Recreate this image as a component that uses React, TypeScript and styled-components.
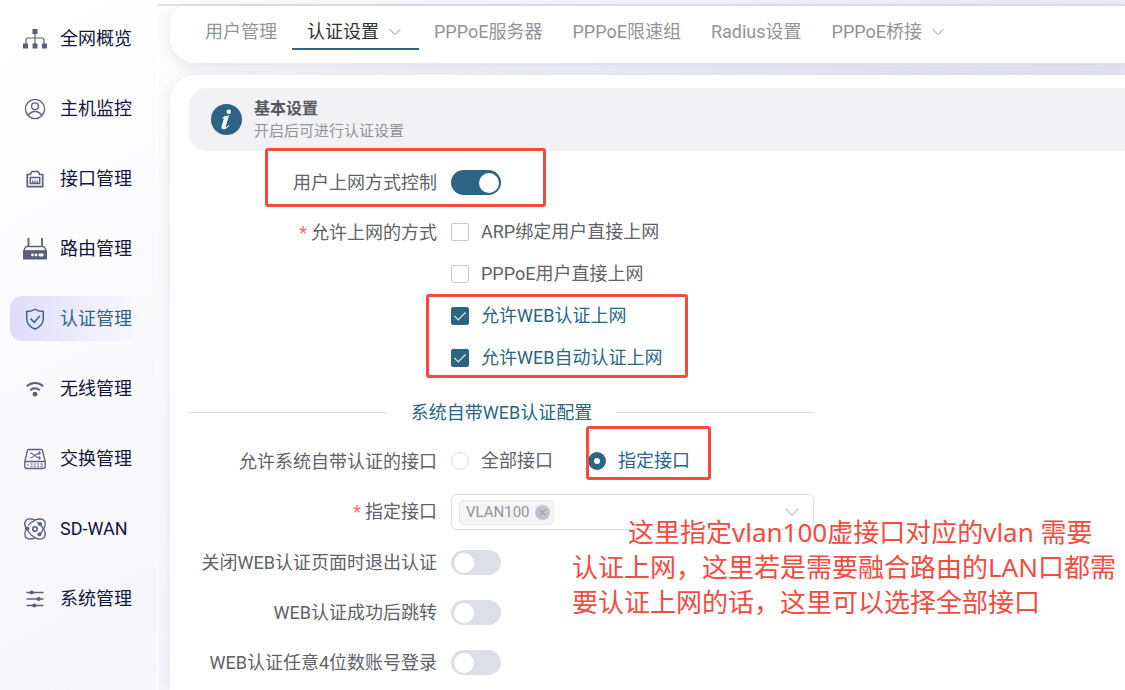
import React from "react";
import styled, { createGlobalStyle } from "styled-components";

const brand = "#2b6583";

const GlobalStyle = createGlobalStyle`
  *, *::before, *::after { box-sizing: border-box; }
  body {
    margin: 0;
    font-family: Roboto, "Noto Sans CJK SC", sans-serif;
    font-size: 18px;
    color: #606266;
  }
  button, input, select { font: inherit; color: inherit; }
`;

const Page = styled.div`
  position: relative;
  display: flex;
  min-height: 100vh;
  overflow: hidden;
  background: linear-gradient(150deg, #ffffff 0%, #f7f7fb 50%, #eef0f5 100%);
`;

const Sidebar = styled.nav`
  flex: 0 0 158px;
  display: flex;
  flex-direction: column;
  gap: 25px;
  padding: 16px 8px 0 10px;
  border-right: 1px solid #ffffff;
`;

const NavLink = styled.a<{ $active?: boolean }>`
  display: flex;
  align-items: center;
  gap: 13px;
  height: 45px;
  padding: 1px 0 0 13px;
  border-radius: 12px;
  line-height: 26px;
  text-decoration: none;
  white-space: nowrap;
  color: ${(p) => (p.$active ? brand : "#12143a")};
  background: ${(p) =>
    p.$active ? "linear-gradient(90deg, #dfdcfb, rgba(240, 241, 248, 0))" : "none"};
  svg { flex: none; color: ${(p) => (p.$active ? brand : "#5c5f7a")}; }
`;

const Main = styled.main`
  flex: 1;
  min-width: 0;
  display: flex;
  flex-direction: column;
  gap: 12px;
  padding-left: 12px;
  background: linear-gradient(90deg, rgba(238, 238, 248, 0), #ebebf7);
`;

const TopLine = styled.div`
  height: 6px;
  margin: 0 0 -12px -12px;
  border-bottom: 2px solid #e1e1e6;
`;

const TabBar = styled.nav`
  display: flex;
  height: 57px;
  padding-left: 20px;
  background: #ffffff;
  border-radius: 16px 0 0 26px;
  box-shadow: 0 4px 16px rgba(30, 30, 60, 0.1);
`;

const Tab = styled.a<{ $active?: boolean }>`
  display: flex;
  align-items: center;
  gap: 10px;
  height: 44px;
  padding: 10px 15px 0;
  border-bottom: 2px solid ${(p) => (p.$active ? brand : "transparent")};
  color: ${(p) => (p.$active ? "#303133" : "#909399")};
  line-height: 32px;
  text-decoration: none;
  white-space: nowrap;
  svg { margin-right: 3px; color: #909399; }
`;

const Card = styled.section`
  flex: 1;
  padding: 13px 0 0 19px;
  background: #ffffff;
  border-radius: 26px 0 0 0;
  box-shadow: 0 0 16px rgba(30, 30, 60, 0.08);
`;

const Banner = styled.header`
  display: flex;
  align-items: center;
  gap: 12px;
  height: 63px;
  padding-left: 22px;
  background: #f2f2f4;
  border-radius: 18px 0 0 18px;
`;

const BannerTitle = styled.h1`
  margin: 0;
  font-size: 16px;
  line-height: 22px;
  font-weight: 700;
  color: #55575c;
`;

const BannerHint = styled.p`
  margin: 0;
  font-size: 15px;
  line-height: 22px;
  color: #909399;
`;

const Form = styled.form`
  display: flex;
  flex-direction: column;
  gap: 15px;
  max-width: 625px;
  padding: 14px 0 8px;
`;

const Row = styled.div`
  display: grid;
  grid-template-columns: 248px 1fr;
  column-gap: 14px;
`;

const Label = styled.label`
  line-height: 35px;
  text-align: right;
  white-space: nowrap;
`;

const Required = styled.span`
  margin-right: 4px;
  color: #f56c6c;
`;

const Choices = styled.div<{ $inline?: boolean }>`
  display: flex;
  flex-direction: ${(p) => (p.$inline ? "row" : "column")};
  gap: ${(p) => (p.$inline ? "35px" : "7px")};
`;

const Choice = styled.label<{ $on?: boolean }>`
  display: flex;
  align-items: center;
  gap: 12px;
  height: 34px;
  line-height: 34px;
  margin-bottom: 1px;
  white-space: nowrap;
  color: ${(p) => (p.$on ? brand : "#606266")};
`;

const Check = styled.input`
  appearance: none;
  display: grid;
  place-items: center;
  width: 18px;
  height: 18px;
  margin: 0;
  border: 1px solid #c9cbd2;
  border-radius: 2px;
  background: #ffffff;
  &:checked { background: ${brand}; border-color: ${brand}; }
  &:checked::after {
    content: "";
    width: 6px;
    height: 11px;
    margin-top: -4px;
    border: solid #ffffff;
    border-width: 0 1px 1px 0;
    transform: rotate(45deg);
  }
`;

const Radio = styled.input`
  appearance: none;
  width: 18px;
  height: 18px;
  margin: 0;
  border: 1px solid #dcdfe6;
  border-radius: 50%;
  background: #ffffff;
  &:checked { border: 6px solid ${brand}; }
`;

const Switch = styled.input`
  appearance: none;
  align-self: center;
  width: 50px;
  height: 25px;
  margin: 0;
  padding: 3px 2px 2px 3px;
  border-radius: 13px;
  background: #dcdfe6;
  &::after {
    content: "";
    display: block;
    width: 20px;
    height: 20px;
    border-radius: 50%;
    background: #ffffff;
  }
  &:checked { background: ${brand}; }
  &:checked::after { margin-left: auto; }
`;

const Divider = styled.h2`
  display: flex;
  align-items: center;
  gap: 24px;
  margin: 4px 0 -1px;
  font-size: 18px;
  font-weight: 400;
  line-height: 35px;
  color: ${brand};
  white-space: nowrap;
  &::before, &::after {
    content: "";
    flex: 1;
    height: 1px;
    background: #dcdfe6;
  }
`;

const SelectBox = styled.div`
  display: flex;
  align-items: center;
  height: 36px;
  padding: 0 14px 0 7px;
  border: 1px solid #dcdfe6;
  border-radius: 5px;
  select {
    flex: 1;
    min-width: 0;
    height: 34px;
    appearance: none;
    border: 0;
    outline: 0;
    background: transparent;
  }
  > svg { color: #c0c4cc; }
`;

const Tag = styled.span`
  display: flex;
  align-items: center;
  gap: 5px;
  height: 25px;
  padding: 0 3px 0 6px;
  border: 1px solid #e9e9eb;
  border-radius: 5px;
  background: #f4f4f5;
  color: #909399;
  font-size: 15px;
  line-height: 23px;
`;

const TagClose = styled.button`
  display: flex;
  padding: 0;
  border: 0;
  border-radius: 50%;
  background: #c0c4cc;
  color: #85888f;
`;

const Highlight = styled.div<{ $x: number; $y: number; $w: number; $h: number }>`
  position: absolute;
  left: ${(p) => p.$x}px;
  top: ${(p) => p.$y}px;
  width: ${(p) => p.$w}px;
  height: ${(p) => p.$h}px;
  border: 3px solid #f24b3f;
  border-radius: 3px;
  pointer-events: none;
`;

const Note = styled.p`
  position: absolute;
  left: 572px;
  top: 515px;
  margin: 0;
  text-indent: 56px;
  font-family: "Noto Sans", "Noto Sans CJK SC", sans-serif;
  font-size: 26px;
  line-height: 35px;
  color: #f24b3f;
  white-space: nowrap;
  pointer-events: none;
`;

const Icon = ({ children }: { children: React.ReactNode }) => (
  <svg width="24" height="24" viewBox="0 0 24 24" fill="none" stroke="currentColor" strokeWidth="1.5" aria-hidden="true">
    {children}
  </svg>
);

const Chevron = ({ size = 12 }: { size?: number }) => (
  <svg width={size} height={size} viewBox="0 0 12 12" fill="none" stroke="currentColor" strokeWidth="1" aria-hidden="true">
    <path d="M.7 3.2 6 8.7l5.3-5.5" />
  </svg>
);

const icons = {
  topology: (
    <Icon>
      <path d="M12 6v12M3 17v-4q0-2 2-2h14q2 0 2 2v4" strokeWidth="1.2" />
      <path d="M9.5 2h5v5h-5zM0 16.5h5v5H0zM9.5 16.5h5v5h-5zM19 16.5h5v5h-5z" fill="currentColor" stroke="none" />
    </Icon>
  ),
  user: (
    <Icon>
      <circle cx="12" cy="12" r="9.6" strokeWidth="1.3" />
      <circle cx="12" cy="9.3" r="3.4" strokeWidth="1.3" />
      <path d="M5.2 18.8c1.500-3 4-4.300 6.800-4.300s5.300 1.300 6.800 4.300" strokeWidth="1.3" />
    </Icon>
  ),
  port: (
    <Icon>
      <path d="M4.300 19.700V7.500h3.200q.8-3 1.800-3h5.400q1 0 1.800 3h3.200v12.200z" strokeWidth="1.700" />
      <path d="M7.300 16.500v-6h9.400v6z" strokeWidth="1.500" />
      <path d="M9.800 16v-2.500M12 16v-2.500M14.200 16v-2.500" strokeWidth="1.200" />
    </Icon>
  ),
  router: (
    <Icon>
      <path d="M5.500 1v9M19 1v9" strokeWidth="1.800" />
      <path d="M4 9.500h16q1.500 0 2 1.500l1.200 3H.8L2 11q.5-1.500 2-1.500z" strokeWidth="1.400" />
      <path d="M0 13.500h24v9H0z" fill="currentColor" stroke="none" />
      <g fill="#fff" stroke="none">
        <circle cx="9.500" cy="18" r="1.400" />
        <circle cx="13" cy="18" r="1.400" />
        <rect x="15.500" y="16.600" width="5.200" height="2.800" rx="1.400" />
      </g>
    </Icon>
  ),
  shield: (
    <Icon>
      <path d="M12 2.200c2.300 1.700 5 2.300 8.300 2.300v7.500c0 5-3.500 8-8.300 10-4.800-2-8.300-5-8.300-10V4.500c3.300 0 6-.6 8.300-2.300z" strokeWidth="1.400" />
      <path d="m7.500 11.500 3.700 3.800 5.600-6.300" strokeWidth="1.500" />
    </Icon>
  ),
  wifi: (
    <Icon>
      <path d="M3.800 9.200c4.800-4.200 11.600-4.200 16.400 0M7.200 13.300c2.900-2.500 6.700-2.500 9.600 0" strokeWidth="2" />
      <circle cx="12" cy="17.200" r="2.400" fill="currentColor" stroke="none" />
    </Icon>
  ),
  exchange: (
    <Icon>
      <path d="M5.700 2.500h12.600q1 0 1.200 1l2.700 11v5q0 2-2 2H3.800q-2 0-2-2v-5l2.700-11q.2-1 1.200-1zM1.800 14.500h20.400" strokeWidth="1.300" />
      <path d="M6.800 6c4.500 0 5 5 10.400 5M6.800 11c4.500 0 5-5 10.400-5M15.700 4.500 17.200 6l-1.500 1.500M15.700 9.500l1.500 1.500-1.500 1.500" strokeWidth="1.200" />
      <path d="M4 18h1.500M7.500 17h2.200M10.700 17h2.200M13.900 17h2.200M17.500 17h2.500M7.500 19.300h2.200M10.700 19.300h2.200M13.900 19.300h2.200M17.500 19.300h2.500" strokeWidth="1.100" />
    </Icon>
  ),
  sdwan: (
    <Icon>
      <path
        d="M12 3.200C15 1.600 19 1.500 20.800 3.200s1.600 5.600-.2 8.800c1.800 3.200 2 7 .2 8.800s-5.800 1.600-8.800 0c-3 1.600-7 1.700-8.800 0s-1.600-5.600.2-8.800C1.600 8.800 1.400 5 3.200 3.200s5.800-1.600 8.800 0z"
        strokeWidth="1.500"
      />
      <path d="M4 12c1.800 3.700 4.400 6.800 8 8.600M12 3.400C9.200 4.600 7 6.200 5.300 8.500M14 5c2.700 1.600 4.800 3.800 6.300 7M20.200 12c-.7 2-1.700 3.500-3.200 5" strokeWidth="1.300" />
      <circle cx="12" cy="12" r="2.300" strokeWidth="1.600" />
      <circle cx="4.400" cy="11.500" r="2" fill="currentColor" stroke="none" />
      <circle cx="17" cy="7" r="2" fill="currentColor" stroke="none" />
      <circle cx="16.500" cy="17.300" r="2" fill="currentColor" stroke="none" />
    </Icon>
  ),
  sliders: (
    <Icon>
      <path d="M3.500 5.500h17M3.500 12h17M3.500 18.500h17" strokeWidth="1.400" />
      <g fill="currentColor" stroke="none">
        <circle cx="8.700" cy="5.500" r="2.100" />
        <circle cx="15.700" cy="12" r="2.100" />
        <circle cx="11.300" cy="18.500" r="2.100" />
      </g>
    </Icon>
  ),
};

const navItems: { icon: keyof typeof icons; text: string; active?: boolean }[] = [
  { icon: "topology", text: "全网概览" },
  { icon: "user", text: "主机监控" },
  { icon: "port", text: "接口管理" },
  { icon: "router", text: "路由管理" },
  { icon: "shield", text: "认证管理", active: true },
  { icon: "wifi", text: "无线管理" },
  { icon: "exchange", text: "交换管理" },
  { icon: "sdwan", text: "SD-WAN" },
  { icon: "sliders", text: "系统管理" },
];

const tabs = [
  { text: "用户管理" },
  { text: "认证设置", active: true, menu: true },
  { text: "PPPoE服务器" },
  { text: "PPPoE限速组" },
  { text: "Radius设置" },
  { text: "PPPoE桥接", menu: true },
];

const methods = [
  { text: "ARP绑定用户直接上网", on: false },
  { text: "PPPoE用户直接上网", on: false },
  { text: "允许WEB认证上网", on: true },
  { text: "允许WEB自动认证上网", on: true },
];

const switches = ["关闭WEB认证页面时退出认证", "WEB认证成功后跳转", "WEB认证任意4位数账号登录"];

export default function App() {
  return (
    <Page>
      <GlobalStyle />
      <Sidebar>
        {navItems.map((n) => (
          <NavLink key={n.text} href="#" $active={n.active}>
            {icons[n.icon]}
            {n.text}
          </NavLink>
        ))}
      </Sidebar>
      <Main>
        <TopLine />
        <TabBar>
          {tabs.map((t) => (
            <Tab key={t.text} href="#" $active={t.active}>
              {t.text}
              {t.menu && <Chevron />}
            </Tab>
          ))}
        </TabBar>
        <Card>
          <Banner>
            <svg width="31" height="31" viewBox="0 0 31 31" aria-hidden="true">
              <circle cx="15.5" cy="15.5" r="15.5" fill={brand} />
              <circle cx="17.8" cy="7.8" r="2.2" fill="#fff" />
              <path d="M11.300 13.800c2-1.500 3.800-2.200 6.700-2.300l-3.200 10.700c-.4 1.400.8 1 2.900-1.200l.6.600c-2 2.600-3.800 3.700-5.600 3.600-2 0-2.500-1.400-2-3.200l2-6.700c.3-1-.2-1.200-1.400-.9z" fill="#fff" />
            </svg>
            <div>
              <BannerTitle>基本设置</BannerTitle>
              <BannerHint>开启后可进行认证设置</BannerHint>
            </div>
          </Banner>
          <Form>
            <Row>
              <Label htmlFor="control">用户上网方式控制</Label>
              <Switch id="control" type="checkbox" role="switch" defaultChecked />
            </Row>
            <Row role="group" aria-labelledby="methods">
              <Label as="span" id="methods">
                <Required>*</Required>允许上网的方式
              </Label>
              <Choices>
                {methods.map((m) => (
                  <Choice key={m.text} $on={m.on}>
                    <Check type="checkbox" defaultChecked={m.on} />
                    {m.text}
                  </Choice>
                ))}
              </Choices>
            </Row>
            <Divider>系统自带WEB认证配置</Divider>
            <Row role="radiogroup" aria-labelledby="scope">
              <Label as="span" id="scope">允许系统自带认证的接口</Label>
              <Choices $inline>
                <Choice>
                  <Radio type="radio" name="scope" />
                  全部接口
                </Choice>
                <Choice $on>
                  <Radio type="radio" name="scope" defaultChecked />
                  指定接口
                </Choice>
              </Choices>
            </Row>
            <Row>
              <Label htmlFor="port">
                <Required>*</Required>指定接口
              </Label>
              <SelectBox>
                <Tag>
                  VLAN100
                  <TagClose type="button" aria-label="VLAN100">
                    <svg width="15" height="15" viewBox="0 0 15 15" stroke="currentColor" aria-hidden="true">
                      <path d="m4.500 4.500 6 6m0-6-6 6" />
                    </svg>
                  </TagClose>
                </Tag>
                <select id="port" defaultValue="">
                  <option value="" />
                </select>
                <Chevron size={14} />
              </SelectBox>
            </Row>
            {switches.map((s, i) => (
              <Row key={s}>
                <Label htmlFor={`option-${i}`}>{s}</Label>
                <Switch id={`option-${i}`} type="checkbox" role="switch" />
              </Row>
            ))}
          </Form>
        </Card>
      </Main>
      <Highlight $x={265} $y={148} $w={281} $h={59} />
      <Highlight $x={426} $y={294} $w={262} $h={84} />
      <Highlight $x={586} $y={426} $w={125} $h={54} />
      <Note>
        这里指定vlan100虚接口对应的vlan 需要
        <br />
        认证上网，这里若是需要融合路由的LAN口都需
        <br />
        要认证上网的话，这里可以选择全部接口
      </Note>
    </Page>
  );
}
